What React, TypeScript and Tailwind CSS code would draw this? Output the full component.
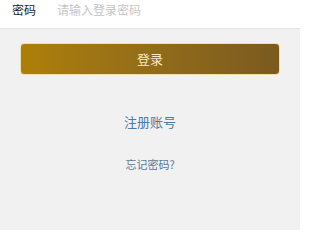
export default function App() {
  return (
    <div className="h-[230px] w-[300px] overflow-hidden bg-[#f1f1f1] font-['Noto_Sans_CJK_SC',sans-serif]">
      <div className="flex h-[29px] items-start gap-[21px] border-b border-[#e4e4e4] bg-white pl-[12px] pt-[1px]">
        <span className="text-[12px] leading-[18px] text-[#222]">密码</span>
        <span className="text-[12px] leading-[18px] text-[#c6c6c6]">请输入登录密码</span>
      </div>
      <div className="px-[20px] pt-[14px]">
        <button className="flex h-[32px] w-full items-center justify-center rounded-[4px] border border-[#f3dfa6] bg-gradient-to-r from-[#ad7f08] to-[#7a5a1f] text-[13px] text-[#f7ecd0]">
          登录
        </button>
      </div>
      <div className="mt-[38px] text-center text-[13px] leading-[18px] text-[#4d7aa6]">注册账号</div>
      <div className="mt-[25px] text-center text-[11px] leading-[16px] text-[#5a7898]">忘记密码?</div>
    </div>
  );
}
